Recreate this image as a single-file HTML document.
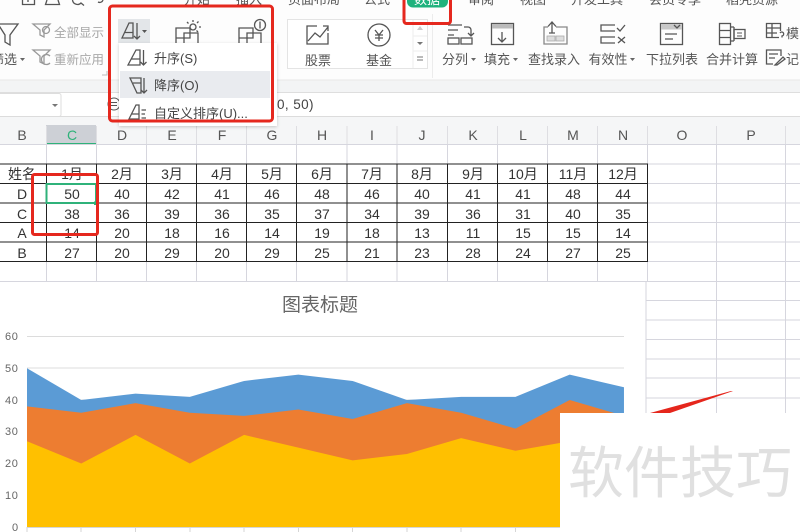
<!DOCTYPE html>
<html lang="zh">
<head>
<meta charset="utf-8">
<title>WPS 数据排序</title>
<style>
html,body{margin:0;padding:0;background:#fff;width:800px;height:532px;overflow:hidden}
svg{display:block;font-family:"Liberation Sans","Noto Sans CJK SC",sans-serif}
.ic{fill:none;stroke:#555;stroke-width:1.3}
.lg{fill:none;stroke:#999;stroke-width:1.3}
.r{font-size:13px;fill:#555;text-anchor:middle}
.hd{font-size:14px;fill:#555;text-anchor:middle}
.c{font-size:14px;fill:#333;text-anchor:middle}
.ax{font-size:11px;fill:#666;letter-spacing:.6px}
.tab{font-size:13px;fill:#555;text-anchor:middle}
.g{stroke:#d6d6de;stroke-width:1}
.b{stroke:#222;stroke-width:1}
.m{font-size:13px;fill:#444}
</style>
</head>
<body>
<svg width="800" height="532" viewBox="0 0 800 532" xmlns="http://www.w3.org/2000/svg">
<defs>
<filter id="sh" x="-10%" y="-10%" width="120%" height="120%"><feDropShadow dx="0" dy="1" stdDeviation="1.5" flood-color="#000" flood-opacity=".2"/></filter>
</defs>
<!-- ribbon background -->
<rect width="800" height="80" fill="#fdfdfd"/>
<!-- top tabs -->
<g fill="none" stroke="#555" stroke-width="1.3">
<path d="M22.500 0V4.500H34.500V0M28 0V2"/><path d="M47 0L45.500 4.500H59.500L58 0"/><path d="M72.500 0A5 5 0 0 0 81 3L84 5.500"/><path d="M98 2A3.500 3.500 0 0 0 103 0"/>
</g>
<text class="tab" x="197" y="4">开始</text>
<text class="tab" x="249" y="4">插入</text>
<text class="tab" x="314" y="4">页面布局</text>
<text class="tab" x="377" y="4">公式</text>
<rect x="407" y="-8" width="41" height="15.500" rx="6" fill="#1fb27d"/>
<text x="427" y="4" font-size="13" fill="#fff" text-anchor="middle">数据</text>
<text class="tab" x="481" y="4">审阅</text>
<text class="tab" x="533" y="4">视图</text>
<text class="tab" x="597" y="4">开发工具</text>
<text class="tab" x="675" y="4">会员专享</text>
<text class="tab" x="752" y="4">稻壳资源</text>

<!-- filter group -->
<path d="M-2 24H18L10 35V45L5 42V35Z" class="ic" stroke-width="1.500"/>
<text x="17" y="64" font-size="13" fill="#555" text-anchor="end">筛选</text>
<path d="M20 58h5l-2.500 3z" fill="#666"/>
<g class="lg" stroke="#aaa"><path d="M33 24H50L44 30V37L40 35V30Z"/><circle cx="46" cy="30" r="3.500"/></g>
<text x="54" y="37" font-size="12.500" fill="#a8a8a8">全部显示</text>
<g class="lg" stroke="#aaa"><path d="M33 50H50L44 56V64L40 62V56Z"/><path d="M50 56A5 5 0 1 0 50 63"/></g>
<text x="54" y="64" font-size="12.500" fill="#a8a8a8">重新应用</text>
<path d="M102 75h5v-4" fill="none" stroke="#bbb"/>

<!-- sort button -->
<rect x="118" y="19" width="32" height="24" fill="#e3e6e9"/>
<g class="ic" stroke-width="1.300"><path d="M122 38L129 23H133V38ZM125 32.500H133"/><path d="M137 23V39M134 36L137 39L140 36"/></g>
<path d="M142 30h5l-2.500 3z" fill="#555"/>

<!-- highlight icons -->
<g class="ic" stroke-width="1.200">
<path d="M176 43V28H190V38H176"/><path d="M184 43V33H198V43"/><circle cx="193" cy="27" r="3"/>
<path d="M193 20V22M199 27H201M187 22L188.500 23.500M198.500 21.500L197 23M198 32L196.500 30.500"/>
<path d="M239 43V28H253V38H239"/><path d="M247 43V33H261V43"/><circle cx="260" cy="25" r="5.500"/><path d="M260 21.500V28.500"/>
</g>

<!-- gallery -->
<rect x="287.500" y="19.500" width="140" height="49" fill="#fff" stroke="#e4e4e4"/>
<path d="M413 20V68M413 36H427M413 51H427" stroke="#eee" fill="none"/>
<path d="M420 26l-3 4h6z" fill="#ccc"/><path d="M417 42h6l-3 3z" fill="#777"/>
<path d="M417 57h6M417 60h6" stroke="#777" fill="none"/>
<g class="ic"><path d="M317 26H307V44H328V33"/><path d="M308 41L315 33L320 37L328 27M323 26H328V31"/></g>
<text class="r" x="318" y="65">股票</text>
<circle cx="379" cy="35" r="11" class="ic"/>
<path d="M375 30L379 35L383 30M379 35V41M375 35H383M375 38H383" class="ic" stroke-width="1.100"/>
<text class="r" x="379" y="65">基金</text>
<path d="M432.500 14V78" stroke="#ececec"/>

<!-- 分列 -->
<g class="ic">
<path d="M448 25H462M448 30H458M448 35H454"/><path d="M464 27H468A3 3 0 0 1 471 30V35M468 33L471 36L474 33"/>
<rect x="448" y="38" width="11" height="6"/><rect x="461" y="38" width="11" height="6"/>
</g>
<text class="r" x="455" y="64">分列</text><path d="M471 58h5l-2.500 3z" fill="#666"/>
<!-- 填充 -->
<rect x="491.500" y="23.500" width="22" height="21" class="ic"/><rect x="492" y="24" width="21" height="4.500" fill="#bbb"/>
<path d="M502 32V42M498 38L502 42L506 38" class="ic"/>
<text class="r" x="497" y="64">填充</text><path d="M513 58h5l-2.500 3z" fill="#666"/>
<!-- 查找录入 -->
<path d="M548 27H544V44H567V27H556" fill="none" stroke="#888" stroke-width="1.300"/>
<rect x="547" y="36" width="8" height="5" fill="#ddd" stroke="#aaa" stroke-width=".8"/><rect x="556" y="36" width="8" height="5" fill="#ddd" stroke="#aaa" stroke-width=".8"/>
<path d="M552 33V23M548 26.500L552 22L556 26.500M549 33H555" class="ic" stroke-width="1.500"/>
<text class="r" x="554" y="64">查找录入</text>
<!-- 有效性 -->
<g class="ic"><path d="M615 25H601V31H615M615 37H601V43H615"/><path d="M617 28L620 31L625 25M618 37L625 43M625 37L618 43"/></g>
<text class="r" x="608" y="64">有效性</text><path d="M630 58h5l-2.500 3z" fill="#666"/>
<!-- 下拉列表 -->
<rect x="660.500" y="23.500" width="22" height="21" class="ic"/><rect x="661" y="24" width="21" height="5.500" fill="#c8c8c8"/>
<path d="M674 25L677 28L680 25M665 34H677M665 39H673" class="ic" stroke-width="1.200"/>
<text class="r" x="672" y="64">下拉列表</text>
<!-- 合并计算 -->
<g class="ic"><rect x="719.500" y="23.500" width="11" height="21"/><path d="M719.500 30.500H730.500M719.500 37.500H730.500"/><path d="M731 27H734M731 41H734M734 27V41"/><rect x="734" y="29.500" width="11" height="9"/><path d="M737 33H742M737 36H742" stroke-width="1"/></g>
<text class="r" x="732" y="64">合并计算</text>
<!-- 模 / 记 -->
<g class="ic" stroke-width="1.200"><path d="M779 37.500H766.500V23.500H780.500V31M766.500 28H780.500M766.500 33H777M772 23.500V37.500"/><path d="M780 33A2 2 0 1 1 782 36V37.500"/>
<path d="M781 56V50H766.500V64H773M769 54H778M769 58H775"/><path d="M775 65L783 57L785 59L777 65Z"/></g>
<text x="786" y="38" font-size="13" fill="#555">模</text>
<text x="786" y="64" font-size="13" fill="#555">记</text>

<!-- band and formula bar -->
<rect y="80" width="800" height="12" fill="#f3f4f5"/>
<path d="M0 80H800" stroke="#e8e8e8"/><path d="M0 92.500H800" stroke="#dedede"/>
<rect y="93" width="800" height="24" fill="#fff"/>
<rect x="-4" y="93.500" width="65" height="23" rx="2" fill="#fff" stroke="#ddd"/>
<path d="M52 104h6l-3 3z" fill="#777"/>
<circle cx="114" cy="104" r="6" fill="none" stroke="#555"/><path d="M111 102.500H117M111 105.500H117" stroke="#555"/>
<text x="277" y="109" font-size="13.500" fill="#444" letter-spacing=".4">0, 50)</text>

<!-- column headers -->
<rect y="117" width="800" height="27" fill="#f5f6f7"/>
<path d="M0 116.500H800" stroke="#dcdcdc"/>
<rect x="46" y="125" width="50" height="19" fill="#cdd0d6"/>
<path d="M46 144H97" stroke="#2fb27a" stroke-width="2"/>
<g class="hd">
<text x="22" y="140">B</text><text x="72" y="140" style="fill:#2fb27a">C</text><text x="122" y="140">D</text><text x="172" y="140">E</text><text x="222" y="140">F</text><text x="272" y="140">G</text><text x="322" y="140">H</text><text x="372" y="140">I</text><text x="422" y="140">J</text><text x="473" y="140">K</text><text x="523" y="140">L</text><text x="573" y="140">M</text><text x="623" y="140">N</text><text x="682" y="140">O</text><text x="751" y="140">P</text>
</g>
<path d="M46.500 126V144M96.500 126V144M146.500 126V144M196.500 126V144M246.500 126V144M296.500 126V144M347 126V144M397 126V144M447.500 126V144M497.500 126V144M547.500 126V144M597.500 126V144M647.500 126V144M716.500 126V144M785.500 126V144" stroke="#dedee2"/>

<!-- grid -->
<g class="g">
<path d="M0 144.500H800M0 164H800M0 183.500H800M0 203H800M0 222.500H800M0 242H800M0 261.500H800M0 281.500H800M646 300.500H800M646 320H800M646 339.500H800M646 359H800M646 378H800M646 398H800"/>
<path d="M46.500 144V282M96.500 144V282M146.500 144V282M196.500 144V282M246.500 144V282M296.500 144V282M347 144V282M397 144V282M447.500 144V282M497.500 144V282M547.500 144V282M597.500 144V282M647.500 144V282M716.500 144V532M785.500 144V532M646 282V532"/>
</g>
<!-- table borders -->
<g class="b">
<path d="M0 164H648M0 183.500H648M0 203H648M0 222.500H648M0 242H648M0 261.500H648"/>
<path d="M46.500 164V262M96.500 164V262M146.500 164V262M196.500 164V262M246.500 164V262M296.500 164V262M347 164V262M397 164V262M447.500 164V262M497.500 164V262M547.500 164V262M647.500 164V262M597.500 164V262"/>
</g>
<!-- table text -->
<g class="c">
<text x="22" y="179">姓名</text><text x="72" y="179">1月</text><text x="122" y="179">2月</text><text x="172" y="179">3月</text><text x="222" y="179">4月</text><text x="272" y="179">5月</text><text x="322" y="179">6月</text><text x="372" y="179">7月</text><text x="422" y="179">8月</text><text x="473" y="179">9月</text><text x="523" y="179">10月</text><text x="573" y="179">11月</text><text x="623" y="179">12月</text>
<text x="22" y="199">D</text><text x="72" y="199">50</text><text x="122" y="199">40</text><text x="172" y="199">42</text><text x="222" y="199">41</text><text x="272" y="199">46</text><text x="322" y="199">48</text><text x="372" y="199">46</text><text x="422" y="199">40</text><text x="473" y="199">41</text><text x="523" y="199">41</text><text x="573" y="199">48</text><text x="623" y="199">44</text>
<text x="22" y="219">C</text><text x="72" y="219">38</text><text x="122" y="219">36</text><text x="172" y="219">39</text><text x="222" y="219">36</text><text x="272" y="219">35</text><text x="322" y="219">37</text><text x="372" y="219">34</text><text x="422" y="219">39</text><text x="473" y="219">36</text><text x="523" y="219">31</text><text x="573" y="219">40</text><text x="623" y="219">35</text>
<text x="22" y="238">A</text><text x="72" y="238">14</text><text x="122" y="238">20</text><text x="172" y="238">18</text><text x="222" y="238">16</text><text x="272" y="238">14</text><text x="322" y="238">19</text><text x="372" y="238">18</text><text x="422" y="238">13</text><text x="473" y="238">11</text><text x="523" y="238">15</text><text x="573" y="238">15</text><text x="623" y="238">14</text>
<text x="22" y="258">B</text><text x="72" y="258">27</text><text x="122" y="258">20</text><text x="172" y="258">29</text><text x="222" y="258">20</text><text x="272" y="258">29</text><text x="322" y="258">25</text><text x="372" y="258">21</text><text x="422" y="258">23</text><text x="473" y="258">28</text><text x="523" y="258">24</text><text x="573" y="258">27</text><text x="623" y="258">25</text>
</g>
<!-- selection -->
<rect x="46.500" y="184" width="49.500" height="19" fill="none" stroke="#2fb27a" stroke-width="2"/>
<rect x="94" y="201.500" width="3.500" height="3.500" fill="#2fb27a"/>
<rect x="32.500" y="174.500" width="65" height="60" rx="2" fill="none" stroke="#e5281e" stroke-width="3"/>

<!-- chart -->
<rect x="0" y="282" width="644" height="250" fill="#fff"/>
<text x="320" y="311" font-size="19" fill="#666" text-anchor="middle">图表标题</text>
<path d="M27 336.500H624M27 368H624M27 400H624M27 431.500H624M27 463H624M27 495H624" stroke="#dcdcdc"/>
<g class="ax">
<text x="5" y="340">60</text><text x="5" y="372">50</text><text x="5" y="404">40</text><text x="5" y="435">30</text><text x="5" y="467">20</text><text x="5" y="499">10</text><text x="12" y="531">0</text>
</g>
<g transform="translate(27 527) scale(54.270 -3.175)">
<polygon fill="#5b9bd5" points="0,0 0,50 1,40 2,42 3,41 4,46 5,48 6,46 7,40 8,41 9,41 10,48 11,44 11,0"/>
<polygon fill="#ed7d31" points="0,0 0,38 1,36 2,39 3,36 4,35 5,37 6,34 7,39 8,36 9,31 10,40 11,35 11,0"/>
<polygon fill="#ffc000" points="0,0 0,27 1,20 2,29 3,20 4,29 5,25 6,21 7,23 8,28 9,24 10,27 11,25 11,0"/>
</g>
<path d="M27 527.500H624M27 527V532M81 527V532M135.500 527V532M190 527V532M244 527V532M298.500 527V532M352.500 527V532M407 527V532M461 527V532M515.500 527V532" stroke="#d6d6d6" fill="none"/>

<!-- dropdown -->
<rect x="119" y="43" width="158" height="83" fill="#fff" filter="url(#sh)"/>
<rect x="120" y="71" width="150" height="27" fill="#e9ebef"/>
<g class="ic" stroke-width="1.200">
<path d="M128 65L136 50H140V65ZM131 59H140"/><path d="M143.500 50V65M140.500 62L143.500 65L146.500 62"/>
<path d="M130 78H141V93H137ZM133 83H141"/><path d="M144 78V93M141 90L144 93L147 90"/>
<path d="M129 119L136 105H139V119ZM132 114H139"/><path d="M141.500 110H146M141.500 114H145M141.500 118H146"/>
</g>
<text class="m" x="154" y="63">升序(S)</text>
<text class="m" x="154" y="90">降序(O)</text>
<text class="m" x="154" y="118">自定义排序(U)...</text>

<!-- red highlights -->
<rect x="109.500" y="6" width="163" height="115" rx="3" fill="none" stroke="#e5281e" stroke-width="3"/>
<path d="M404 -3V21A2.500 2.500 0 0 0 406.500 23.500H448A2.500 2.500 0 0 0 450.500 21V-3" fill="none" stroke="#e5281e" stroke-width="3"/>
<polygon points="733,391 731,391 650,413 670,413" fill="#e5261c"/>

<!-- watermark -->
<rect x="560" y="413" width="240" height="119" fill="#fff"/>
<text x="680" y="493" font-size="56" fill="#e0e0e0" text-anchor="middle">软件技巧</text>
</svg>
</body>
</html>
